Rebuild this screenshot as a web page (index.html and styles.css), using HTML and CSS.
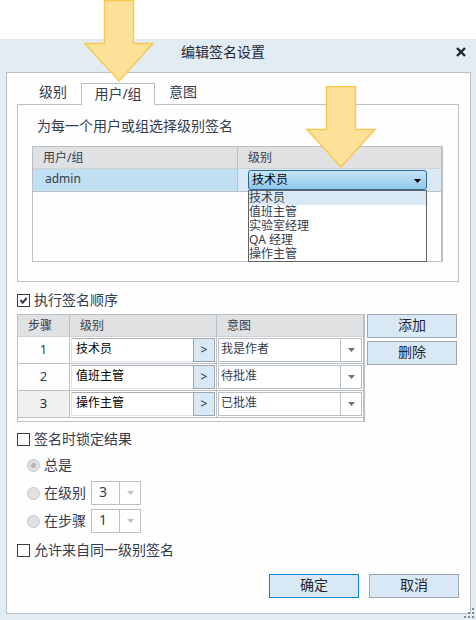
FILE: index.html
```html
<!DOCTYPE html>
<html lang="zh-CN">

<head>
  <meta charset="utf-8">
  <title>编辑签名设置</title>
  <link rel="stylesheet" href="styles.css">
</head>

<body>
  <div class="window">
    <div class="titlebar">
      <h1>编辑签名设置</h1>
      <button type="button" class="close" aria-label="关闭">
        <svg width="10" height="10" viewBox="0 0 10 10"><path d="M1 1L9 9M9 1L1 9" stroke="#1f2733" stroke-width="2.4"/></svg>
      </button>
    </div>

    <form class="content">
      <div class="tabs" role="tablist">
        <button type="button" class="tab" role="tab">级别</button>
        <div class="tab-current">
          <button type="button" class="tab active" role="tab" aria-selected="true">用户/组</button>
          <svg class="arrow arrow-tab" width="70" height="83" viewBox="0 0 70 83"><path d="M20.5 0.5H49.5V43.5H69L35 81L1 43.5H20.5Z"/></svg>
        </div>
        <button type="button" class="tab" role="tab">意图</button>
      </div>

      <div class="tab-panel" role="tabpanel">
        <p class="hint">为每一个用户或组选择级别签名</p>
        <div class="users">
          <table class="grid">
            <thead>
              <tr><th>用户/组</th><th>级别</th></tr>
            </thead>
            <tbody>
              <tr class="selected">
                <td>admin</td>
                <td class="level-cell">
                  <div class="combo">
                    <select class="level-select" aria-label="级别">
                      <option>技术员</option>
                      <option>值班主管</option>
                      <option>实验室经理</option>
                      <option>QA 经理</option>
                      <option>操作主管</option>
                    </select>
                    <ul class="menu" role="listbox" aria-label="级别">
                      <li class="current" role="option" aria-selected="true">技术员</li>
                      <li role="option">值班主管</li>
                      <li role="option">实验室经理</li>
                      <li role="option">QA 经理</li>
                      <li role="option">操作主管</li>
                    </ul>
                    <svg class="arrow arrow-level" width="70" height="83" viewBox="0 0 70 83"><path d="M20.5 0.5H49.5V43.5H69L35 81L1 43.5H20.5Z"/></svg>
                  </div>
                </td>
              </tr>
            </tbody>
          </table>
        </div>
      </div>

      <label class="check"><input type="checkbox" checked>执行签名顺序</label>

      <div class="order">
        <div class="steps">
          <table class="grid">
            <thead>
              <tr><th class="step">步骤</th><th>级别</th><th>意图</th></tr>
            </thead>
            <tbody>
              <tr>
                <td class="step">1</td>
                <td><div class="picker"><input type="text" value="技术员" aria-label="步骤 1 级别"><button type="button">&gt;</button></div></td>
                <td><select class="split" aria-label="步骤 1 意图"><option>我是作者</option></select></td>
              </tr>
              <tr>
                <td class="step">2</td>
                <td><div class="picker"><input type="text" value="值班主管" aria-label="步骤 2 级别"><button type="button">&gt;</button></div></td>
                <td><select class="split" aria-label="步骤 2 意图"><option>待批准</option></select></td>
              </tr>
              <tr class="editing">
                <td class="step">3</td>
                <td><div class="picker"><input type="text" value="操作主管" aria-label="步骤 3 级别"><button type="button">&gt;</button></div></td>
                <td><select class="split" aria-label="步骤 3 意图"><option>已批准</option></select></td>
              </tr>
            </tbody>
          </table>
        </div>
        <div class="order-buttons">
          <button type="button" class="btn">添加</button>
          <button type="button" class="btn">删除</button>
        </div>
      </div>

      <label class="check lock"><input type="checkbox">签名时锁定结果</label>
      <div class="lock-options">
        <div class="option">
          <label><input type="radio" name="lock" checked disabled>总是</label>
        </div>
        <div class="option">
          <label><input type="radio" name="lock" disabled>在级别</label>
          <select class="split" aria-label="锁定级别" disabled><option>3</option></select>
        </div>
        <div class="option">
          <label><input type="radio" name="lock" disabled>在步骤</label>
          <select class="split" aria-label="锁定步骤" disabled><option>1</option></select>
        </div>
      </div>
      <label class="check"><input type="checkbox">允许来自同一级别签名</label>

      <div class="footer">
        <button type="submit" class="btn primary">确定</button>
        <button type="button" class="btn">取消</button>
      </div>
    </form>

    <svg class="grip" width="10" height="10" viewBox="0 0 10 10" fill="#7f8a9c"><path d="M8 0h2v2h-2zM4 4h2v2h-2zM8 4h2v2h-2zM0 8h2v2h-2zM4 8h2v2h-2zM8 8h2v2h-2z"/></svg>
  </div>
</body>
</html>
```
FILE: styles.css
```css
*
{
   box-sizing: border-box;
}
body
{
   margin: 0;
   padding-top: 39px;
   min-height: 100vh;
   display: flex;
   background: white;
   color: #343c4d;
   font-family: "Noto Sans", "Noto Sans CJK SC", sans-serif;
   font-size: 14px;
   line-height: 20px;
}
button, input, select
{
   margin: 0;
   font: inherit;
   color: inherit;
   border-radius: 0;
}

.window
{
   position: relative;
   flex: 1;
   display: flex;
   flex-direction: column;
   padding: 0 5px 6px 6px;
   background: #e2ecf3;
}
.titlebar
{
   display: flex;
   align-items: center;
   height: 33px;
   padding: 0 5px 8px 0;
}
.titlebar h1
{
   flex: 1;
   margin: 0;
   padding-right: 16px;
   font-size: 14px;
   font-weight: normal;
   text-align: center;
   color: #1f2733;
}
.close
{
   display: flex;
   padding: 0;
   border: none;
   background: none;
}
.content
{
   flex: 1;
   display: flex;
   flex-direction: column;
   padding: 10px 11px 15px 10px;
   border: 1px solid #b9c1c7;
   background: #fefefe;
}
.grip
{
   position: absolute;
   right: 2px;
   bottom: 2px;
}

/* tabs */
.tabs
{
   display: flex;
   height: 22px;
   padding-left: 8px;
}
.tab
{
   height: 22px;
   padding: 0 14px 4px;
   border: none;
   background: none;
   line-height: 18px;
}
.tab-current
{
   position: relative;
}
.tab.active
{
   width: 74px;
   padding: 0 0 2px;
   border: 1px solid #b9c1c7;
   border-bottom: none;
   background: #fefefe;
   position: relative;
}
.tab-panel
{
   margin-top: -1px;
   padding: 11px 15px 19px 14px;
   border: 1px solid #b9c1c7;
}
.hint
{
   margin: 0 0 10px;
   padding-left: 5px;
}
.arrow
{
   position: absolute;
   z-index: 2;
   pointer-events: none;
   fill: #fbe298;
   stroke: #fcc54e;
   stroke-width: 1.4;
}
.arrow-tab
{
   left: 3px;
   bottom: 22px;
}
.arrow-level
{
   left: 58px;
   bottom: 21px;
}

/* grids */
.grid
{
   width: 100%;
   table-layout: fixed;
   border-collapse: separate;
   border-spacing: 0;
   font-size: 12px;
   line-height: 18px;
}
.grid th
{
   height: 22px;
   padding: 0 0 0 10px;
   border-bottom: 1px solid #cfd1d3;
   background: #e0e1e3;
   font-weight: normal;
   text-align: left;
}
.grid td
{
   height: 23px;
   padding: 0 0 0 12px;
   border-bottom: 1px solid #b9c1c7;
}
.grid th + th, .grid td + td
{
   border-left: 1px solid #b9c1c7;
}
.users
{
   min-height: 116px;
   border: 1px solid #b9c1c7;
   border-right-width: 2px;
}
.users td
{
   padding-bottom: 2px;
}
.selected td
{
   background: #c0dff0;
}
.selected .level-cell
{
   padding: 0 0 0 10px;
   background: #d8e9f5;
}
.combo
{
   position: relative;
   width: 179px;
   height: 20px;
}
.level-select
{
   display: block;
   width: 100%;
   height: 20px;
   padding: 0 3px 1px;
   border: 1px solid #2f6690;
   border-radius: 3px;
   appearance: none;
   background:
      url("data:image/svg+xml,%3Csvg xmlns='http://www.w3.org/2000/svg' width='7' height='4'%3E%3Cpath d='M0 0h7L3.5 4z'/%3E%3C/svg%3E") right 5px top 8px no-repeat,
      linear-gradient(#c6e4f6, #8fc9e8);
   color: black;
}
.menu
{
   position: absolute;
   z-index: 1;
   top: 20px;
   left: 0;
   width: 100%;
   margin: 0;
   padding: 0;
   border: 1px solid #606468;
   background: white;
   list-style: none;
   line-height: 14px;
}
.menu .current
{
   background: #d8e9f5;
}

/* signing order */
.check
{
   display: flex;
   align-items: center;
   gap: 4px;
}
.check input
{
   width: 13px;
   height: 13px;
   border: 1px solid #343c4d;
   appearance: none;
   background: white;
}
.check input:checked
{
   background: url("data:image/svg+xml,%3Csvg xmlns='http://www.w3.org/2000/svg' width='11' height='11'%3E%3Cpath d='M2.5 5L4.7 7.6L8.7 3' fill='none' stroke='%23343c4d' stroke-width='2'/%3E%3C/svg%3E") center no-repeat;
}
.tab-panel + .check
{
   margin-top: 8px;
}
.order
{
   display: flex;
   align-items: flex-start;
   gap: 2px;
   margin-top: 4px;
}
.steps
{
   flex: 1;
   padding-bottom: 3px;
   border: 1px solid #b9c1c7;
   border-right-width: 2px;
}
.steps td
{
   height: 27px;
   padding: 1px;
}
.steps th.step
{
   width: 51px;
}
.steps td.step
{
   padding: 0 0 3px;
   text-align: center;
   font-size: 13px;
}
.editing .step
{
   background: #f0f0f0;
   color: #1f2733;
}
.picker
{
   display: flex;
   height: 24px;
}
.picker input
{
   flex: 1;
   min-width: 0;
   padding: 0 4px 2px;
   border: 1px solid #dfe3e8;
   border-top-color: #abadb3;
   border-right: none;
   color: black;
}
.picker button
{
   width: 22px;
   padding: 0;
   border: 1px solid #9fa6ad;
   background: #d8e9f5;
   color: #1f2733;
}
.split
{
   display: block;
   width: 100%;
   height: 24px;
   padding: 0 24px 2px 2px;
   border: 1px solid #b9c1c7;
   appearance: none;
   background:
      url("data:image/svg+xml,%3Csvg xmlns='http://www.w3.org/2000/svg' width='21' height='22'%3E%3Cpath d='M0 0h1v22H0z' fill='%23b9c1c7'/%3E%3Cpath d='M8 9h7l-3.500 4z' fill='%236b747e'/%3E%3C/svg%3E") right top no-repeat white;
}
.order-buttons
{
   display: flex;
   flex-direction: column;
   gap: 3px;
   margin-right: 2px;
}
.btn
{
   width: 90px;
   height: 24px;
   padding: 0 0 3px;
   border: 1px solid #9fa6ad;
   background: #d8e9f5;
   color: #1f2733;
}
.btn.primary
{
   border-color: #0a84d6;
}

/* lock options */
.lock
{
   margin-top: 7px;
}
.lock-options
{
   display: flex;
   flex-direction: column;
   gap: 4px;
   margin: 4px 0 7px 10px;
}
.option
{
   display: flex;
   align-items: center;
   gap: 5px;
   height: 24px;
}
.option label
{
   display: flex;
   align-items: center;
   gap: 4px;
}
.option input
{
   width: 13px;
   height: 13px;
   border: 1px solid #c3c6c9;
   border-radius: 50%;
   appearance: none;
   background: #e0e1e3;
}
.option input:checked
{
   background: radial-gradient(#b0b4b8 2px, #e0e1e3 3px);
}
.option .split
{
   width: 50px;
   padding-left: 7px;
   background-image: url("data:image/svg+xml,%3Csvg xmlns='http://www.w3.org/2000/svg' width='21' height='22'%3E%3Cpath d='M0 0h1v22H0z' fill='%23b9c1c7'/%3E%3Cpath d='M8 9h7l-3.500 4z' fill='%23b9c1c7'/%3E%3C/svg%3E");
   opacity: 1;
}

.footer
{
   display: flex;
   justify-content: flex-end;
   gap: 10px;
   margin-top: auto;
}
```
